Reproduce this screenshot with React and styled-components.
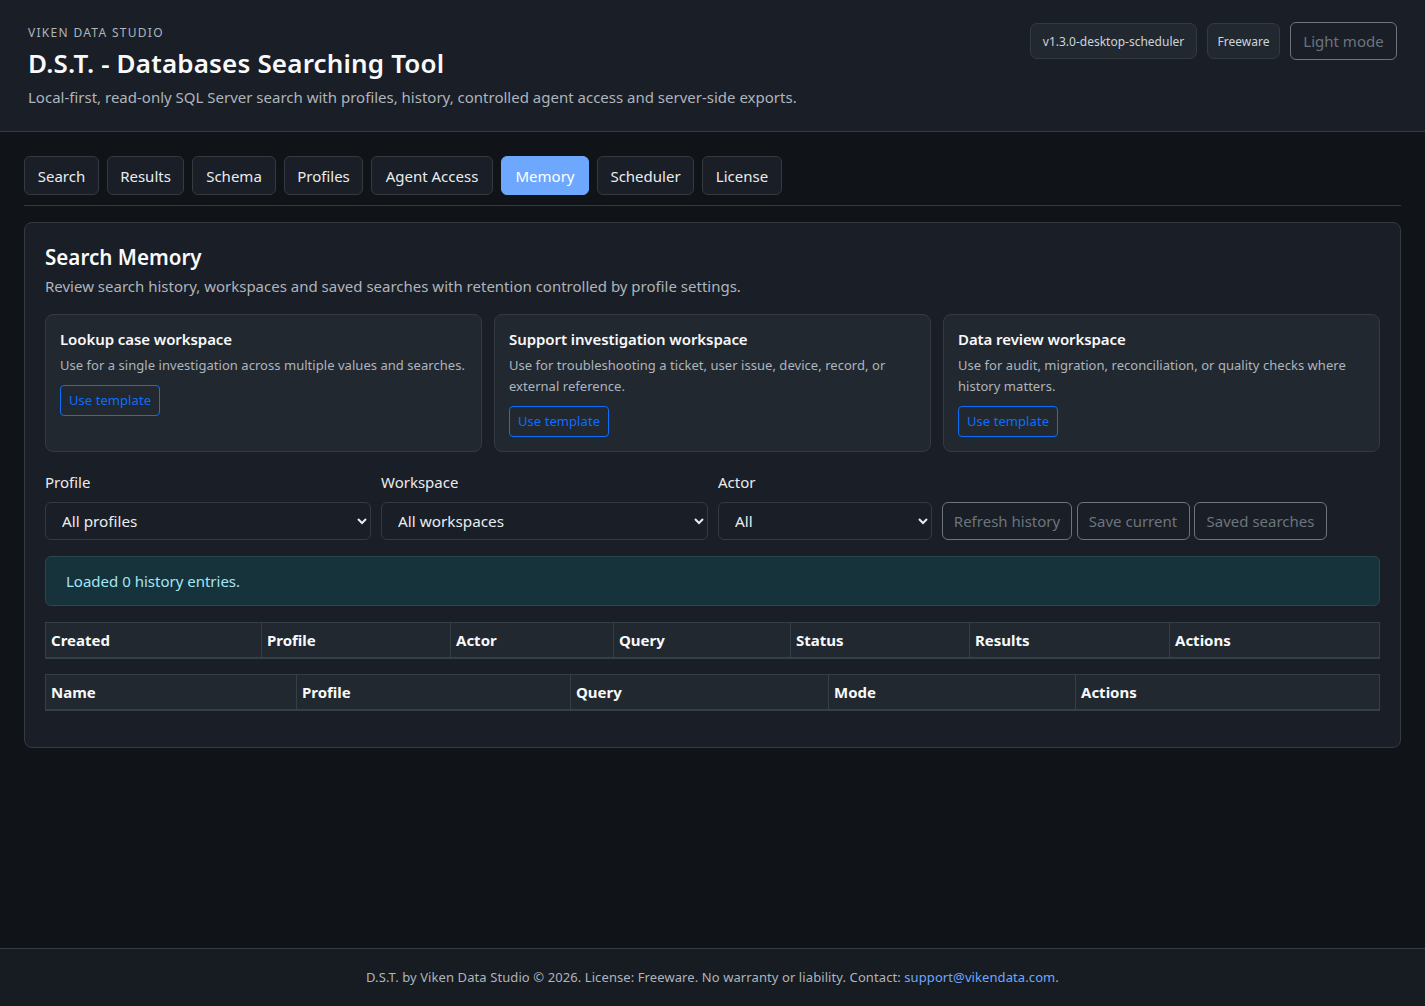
import React from "react";
import styled, { createGlobalStyle } from "styled-components";

const Global = createGlobalStyle`
  * { box-sizing: border-box; }
  html, body { margin: 0; padding: 0; }
  body {
    background: #101418;
    color: #e9ecef;
    font-family: "Noto Sans", "Open Sans", sans-serif;
    font-size: 15px;
    line-height: 1.5;
  }
`;

const Page = styled.div`
  min-height: 1006px;
  display: flex;
  flex-direction: column;
`;

const Header = styled.header`
  height: 132px;
  background: #1a1e26;
  border-bottom: 1px solid #343a40;
  padding: 22px 28px 0;
  display: flex;
  justify-content: space-between;
  align-items: flex-start;
`;

const Eyebrow = styled.div`
  font-size: 12px;
  line-height: 20px;
  letter-spacing: 1.3px;
  text-transform: uppercase;
  color: #adb5bd;
  margin-top: 1px;
`;

const AppTitle = styled.h1`
  margin: 1px 0 3px;
  font-size: 26px;
  line-height: 38px;
  font-weight: 600;
  letter-spacing: 0.17px;
  color: #f8f9fa;
`;

const Tagline = styled.p`
  margin: 0;
  font-size: 15px;
  line-height: 24px;
  color: #adb5bd;
`;

const HeaderTools = styled.div`
  display: flex;
  align-items: center;
  gap: 10px;
`;

const Chip = styled.span`
  height: 36px;
  width: ${(p) => p.$w}px;
  display: inline-flex;
  align-items: center;
  justify-content: center;
  padding-top: 1px;
  font-size: 12px;
  color: #ced4da;
  background: #212830;
  border: 1px solid #343a40;
  border-radius: 7px;
`;

const GhostButton = styled.button`
  height: 38px;
  width: ${(p) => p.$w}px;
  padding: 0;
  font: inherit;
  color: #6c757d;
  background: transparent;
  border: 1px solid #6c757d;
  border-radius: 6px;
`;

const Main = styled.main`
  flex: 1;
  padding: 24px 24px 0;
`;

const Tabs = styled.nav`
  display: flex;
  gap: 8px;
  padding-bottom: 10px;
  border-bottom: 1px solid #343a40;
  margin-bottom: 16px;
`;

const Tab = styled.button`
  height: 39px;
  width: ${(p) => p.$w}px;
  padding: 1px 0 0;
  font: inherit;
  color: ${(p) => (p.$active ? "#fff" : "#e9ecef")};
  background: ${(p) => (p.$active ? "#6ea8fe" : "#1a1e26")};
  border: 1px solid ${(p) => (p.$active ? "#6ea8fe" : "#343a40")};
  border-radius: 6px;
`;

const Panel = styled.section`
  height: 526px;
  background: #1a1e26;
  border: 1px solid #343a40;
  border-radius: 8px;
  padding: 20px;
`;

const PanelTitle = styled.h2`
  margin: 0;
  font-size: 20.6px;
  line-height: 28px;
  font-weight: 600;
  color: #f8f9fa;
`;

const PanelIntro = styled.p`
  margin: 3px 0 16px;
  font-size: 15px;
  line-height: 24px;
  color: #adb5bd;
`;

const CardGrid = styled.div`
  display: grid;
  grid-template-columns: repeat(3, 1fr);
  gap: 12px;
  margin-bottom: 20px;
`;

const Card = styled.article`
  height: 138px;
  padding: 13px 14px;
  background: #212830;
  border: 1px solid #343a40;
  border-radius: 8px;
`;

const CardTitle = styled.h3`
  margin: 0 0 5px;
  font-size: 15px;
  line-height: 22px;
  font-weight: 600;
  letter-spacing: -0.08px;
  color: #f8f9fa;
`;

const CardText = styled.p`
  margin: 0 0 9px;
  font-size: 13px;
  line-height: 21px;
  letter-spacing: 0.04px;
  color: #adb5bd;
`;

const TemplateButton = styled.button`
  height: 31px;
  width: 100px;
  padding: 1px 0 0;
  font: inherit;
  font-size: 13px;
  letter-spacing: 0.07px;
  color: #0d6efd;
  background: transparent;
  border: 1px solid #0d6efd;
  border-radius: 4px;
`;

const FilterRow = styled.div`
  display: flex;
  align-items: flex-end;
  gap: 10px;
  margin-bottom: 16px;
`;

const Field = styled.label`
  display: flex;
  flex-direction: column;
  gap: 10px;
  width: ${(p) => p.$w}px;
  color: #e9ecef;
  line-height: 20px;
`;

const Select = styled.select`
  height: 38px;
  width: 100%;
  padding: 0 12px;
  font: inherit;
  font-size: 15.3px;
  color: #e9ecef;
  background: #1a1e26;
  border: 1px solid #343a40;
  border-radius: 6px;
`;

const ActionGroup = styled.div`
  display: flex;
  gap: 4.5px;
`;

const Notice = styled.div`
  height: 50px;
  display: flex;
  align-items: center;
  padding: 0 20px;
  margin-bottom: 16px;
  color: #a3e6f5;
  background: #16323b;
  border: 1px solid #2a4650;
  border-radius: 6px;
`;

const Table = styled.table`
  width: calc(100% - 1px);
  table-layout: fixed;
  border-collapse: collapse;
  margin-bottom: 15px;
`;

const HeadCell = styled.th`
  height: ${(p) => p.$h}px;
  padding: 0 5px;
  text-align: left;
  font-size: 15px;
  font-weight: 700;
  color: #f8f9fa;
  background: #212830;
  border: 1px solid #343f47;
  border-bottom-width: 2px;
`;

const Footer = styled.footer`
  height: 58px;
  display: flex;
  align-items: center;
  justify-content: center;
  padding-top: 1px;
  font-size: 13px;
  letter-spacing: 0.09px;
  color: #adb5bd;
  border-top: 1px solid #343a40;
  background: #171b22;
`;

const FooterLink = styled.a`
  color: #6ea8fe;
  text-decoration: none;
`;

const tabs = [
  ["Search", 75], ["Results", 77], ["Schema", 84], ["Profiles", 79],
  ["Agent Access", 122], ["Memory", 88], ["Scheduler", 97], ["License", 80],
];

const cards = [
  ["Lookup case workspace", "Use for a single investigation across multiple values and searches."],
  ["Support investigation workspace", "Use for troubleshooting a ticket, user issue, device, record, or external reference."],
  ["Data review workspace", "Use for audit, migration, reconciliation, or quality checks where history matters."],
];

const historyCols = [["Created", 216], ["Profile", 189], ["Actor", 163], ["Query", 177], ["Status", 179], ["Results", 200], ["Actions", 210]];
const savedCols = [["Name", 251], ["Profile", 274], ["Query", 258], ["Mode", 247], ["Actions", 304]];

const HeadTable = ({ cols, rowHeight }) => (
  <Table>
    <colgroup>
      {cols.map(([n, w]) => <col key={n} style={{ width: w }} />)}
    </colgroup>
    <thead>
      <tr>{cols.map(([n]) => <HeadCell key={n} $h={rowHeight}>{n}</HeadCell>)}</tr>
    </thead>
  </Table>
);

export default function App() {
  return (
    <Page>
      <Global />
      <Header>
        <div>
          <Eyebrow>Viken Data Studio</Eyebrow>
          <AppTitle>D.S.T. - Databases Searching Tool</AppTitle>
          <Tagline>Local-first, read-only SQL Server search with profiles, history, controlled agent access and server-side exports.</Tagline>
        </div>
        <HeaderTools>
          <Chip $w={167}>v1.3.0-desktop-scheduler</Chip>
          <Chip $w={73}>Freeware</Chip>
          <GhostButton $w={107}>Light mode</GhostButton>
        </HeaderTools>
      </Header>
      <Main>
        <Tabs>
          {tabs.map(([t, w]) => <Tab key={t} $w={w} $active={t === "Memory"}>{t}</Tab>)}
        </Tabs>
        <Panel>
          <PanelTitle>Search Memory</PanelTitle>
          <PanelIntro>Review search history, workspaces and saved searches with retention controlled by profile settings.</PanelIntro>
          <CardGrid>
            {cards.map(([t, d]) => (
              <Card key={t}>
                <CardTitle>{t}</CardTitle>
                <CardText>{d}</CardText>
                <TemplateButton>Use template</TemplateButton>
              </Card>
            ))}
          </CardGrid>
          <FilterRow>
            <Field $w={326}>Profile<Select><option>All profiles</option></Select></Field>
            <Field $w={327}>Workspace<Select><option>All workspaces</option></Select></Field>
            <Field $w={214}>Actor<Select><option>All</option></Select></Field>
            <ActionGroup>
              <GhostButton $w={130}>Refresh history</GhostButton>
              <GhostButton $w={113}>Save current</GhostButton>
              <GhostButton $w={133}>Saved searches</GhostButton>
            </ActionGroup>
          </FilterRow>
          <Notice>Loaded 0 history entries.</Notice>
          <HeadTable cols={historyCols} rowHeight={35} />
          <HeadTable cols={savedCols} rowHeight={36} />
        </Panel>
      </Main>
      <Footer>
        <span>D.S.T. by Viken Data Studio © 2026. License: Freeware. No warranty or liability. Contact: <FooterLink href="#">support@vikendata.com</FooterLink>.</span>
      </Footer>
    </Page>
  );
}
